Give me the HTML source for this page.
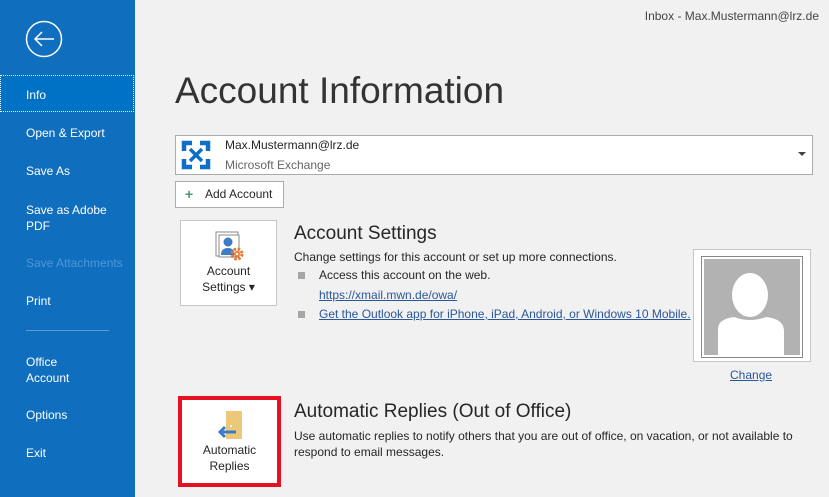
<!DOCTYPE html>
<html><head><style>
body{margin:0;width:829px;height:497px;background:#f1f1f1;font-family:"Segoe UI","Liberation Sans",sans-serif;position:relative;overflow:hidden;color:#262626}
.sb{position:absolute;left:0;top:0;width:135px;height:497px;background:#106ebe;color:#fff;font-size:12px}
.sb div{position:absolute;left:26px}
.a{position:absolute}
a{color:#2b579a;text-decoration:underline}
</style></head><body>
<div class="sb">
<svg class="a" style="position:absolute;left:25px;top:20px" width="38" height="38"><circle cx="19" cy="19" r="17.5" fill="none" stroke="#fff" stroke-width="1.5"/><path d="M10 19H29M17 12L10 19L17 26" fill="none" stroke="#fff" stroke-width="1.5"/></svg>
<div style="left:0;top:75px;width:134px;height:37px;background:#0072c6;border:1px dotted #fff;box-sizing:border-box"></div>
<div style="top:88px">Info</div>
<div style="top:126px">Open &amp; Export</div>
<div style="top:164px">Save As</div>
<div style="top:202px;line-height:16px">Save as Adobe<br>PDF</div>
<div style="top:256px;color:#4f97d7">Save Attachments</div>
<div style="top:294px">Print</div>
<div style="top:330px;width:83px;border-top:1px solid #5a9bd5;left:26px"></div>
<div style="top:354px;line-height:16px">Office<br>Account</div>
<div style="top:408px">Options</div>
<div style="top:446px">Exit</div>
</div>
<div class="a" style="right:10px;top:9px;font-size:12px;color:#444">Inbox - Max.Mustermann@lrz.de</div>
<div class="a" style="left:175px;top:70px;font-size:37px;color:#333">Account Information</div>
<div class="a" style="left:175px;top:135px;width:638px;height:40px;background:#fff;border:1px solid #ababab;box-sizing:border-box">
<svg class="a" style="left:5px;top:4px" width="30" height="30" viewBox="0 0 30 30"><g fill="none" stroke="#0f6fc6" stroke-width="4.5"><path d="M3 11V3H11M19 3H27V11M27 19V27H19M11 27H3V19"/><path d="M9 9L21 21M21 9L9 21" stroke-width="3.5"/></g></svg>
<div class="a" style="left:49px;top:2px;font-size:12px;color:#262626">Max.Mustermann@lrz.de</div>
<div class="a" style="left:49px;top:22px;font-size:12px;color:#666">Microsoft Exchange</div>
<div class="a" style="right:6px;top:16px;width:0;height:0;border:4px solid transparent;border-top:4px solid #444"></div>
</div>
<div class="a" style="left:175px;top:181px;width:109px;height:27px;background:#fff;border:1px solid #ababab;box-sizing:border-box;font-size:12px;line-height:25px;padding-left:29px">Add Account<span class="a" style="left:9px;top:0;color:#4a9a72;font-weight:bold;font-size:14px">+</span></div>
<div class="a" style="left:180px;top:220px;width:97px;height:86px;background:#fff;border:1px solid #c6c6c6;box-sizing:border-box;text-align:center;font-size:12px;line-height:16px">
<svg style="display:block;margin:9px auto 0" width="32" height="32"><rect x="3" y="2" width="22" height="24" fill="#fff" stroke="#888"/><rect x="6" y="5" width="20" height="22" fill="#fff" stroke="#888"/><circle cx="15" cy="12" r="4.5" fill="#3d7cc9"/><path d="M8 25Q8 18 15 18Q20 18 21 22V25Z" fill="#3d7cc9"/><circle cx="24" cy="24" r="5" fill="none" stroke="#e8772e" stroke-width="3" stroke-dasharray="2.5 1.5"/><circle cx="24" cy="24" r="3" fill="#e8772e"/><circle cx="24" cy="24" r="1.3" fill="#fff"/></svg>
<div style="margin-top:1px">Account<br>Settings ▾</div></div>
<div class="a" style="left:294px;top:223px;font-size:19px;color:#262626">Account Settings</div>
<div class="a" style="left:294px;top:250px;font-size:12px">Change settings for this account or set up more connections.</div>
<div class="a" style="left:298px;top:272px;width:7px;height:7px;background:#a6a6a6"></div>
<div class="a" style="left:319px;top:268px;font-size:12px">Access this account on the web.</div>
<div class="a" style="left:319px;top:288px;font-size:12px"><a>https://xmail.mwn.de/owa/</a></div>
<div class="a" style="left:298px;top:311px;width:7px;height:7px;background:#a6a6a6"></div>
<div class="a" style="left:319px;top:307px;font-size:12px"><a>Get the Outlook app for iPhone, iPad, Android, or Windows 10 Mobile.</a></div>
<div class="a" style="left:693px;top:249px;width:118px;height:113px;background:#fff;border:1px solid #c6c6c6;box-sizing:border-box">
<div class="a" style="left:7px;top:6px;width:102px;height:102px;border:1px solid #888;box-sizing:border-box;background:#fff;padding:2px">
<svg width="96" height="96" style="display:block"><rect width="96" height="96" fill="#b2b2b2"/><ellipse cx="46" cy="36" rx="18" ry="22" fill="#fff"/><path d="M14 96V70Q14 60 30 58Q46 64 62 58Q80 60 80 72V96Z" fill="#fff"/></svg></div></div>
<div class="a" style="left:730px;top:368px;font-size:12px"><a>Change</a></div>
<div class="a" style="left:178px;top:396px;width:103px;height:91px;background:#fff;border:4px solid #e81123;box-sizing:border-box;text-align:center;font-size:12px;line-height:16px">
<svg style="display:block;margin:10px auto 0" width="32" height="32"><rect x="12" y="1" width="16" height="28" fill="#ecc87a"/><circle cx="17" cy="16" r="1" fill="#fff"/><path d="M22 22H6M11 17L6 22L11 27" fill="none" stroke="#3d7cc9" stroke-width="3"/></svg>
<div>Automatic<br>Replies</div></div>
<div class="a" style="left:294px;top:401px;font-size:19px">Automatic Replies (Out of Office)</div>
<div class="a" style="left:294px;top:428px;font-size:12px;line-height:16px;width:500px">Use automatic replies to notify others that you are out of office, on vacation, or not available to respond to email messages.</div>
</body></html>
